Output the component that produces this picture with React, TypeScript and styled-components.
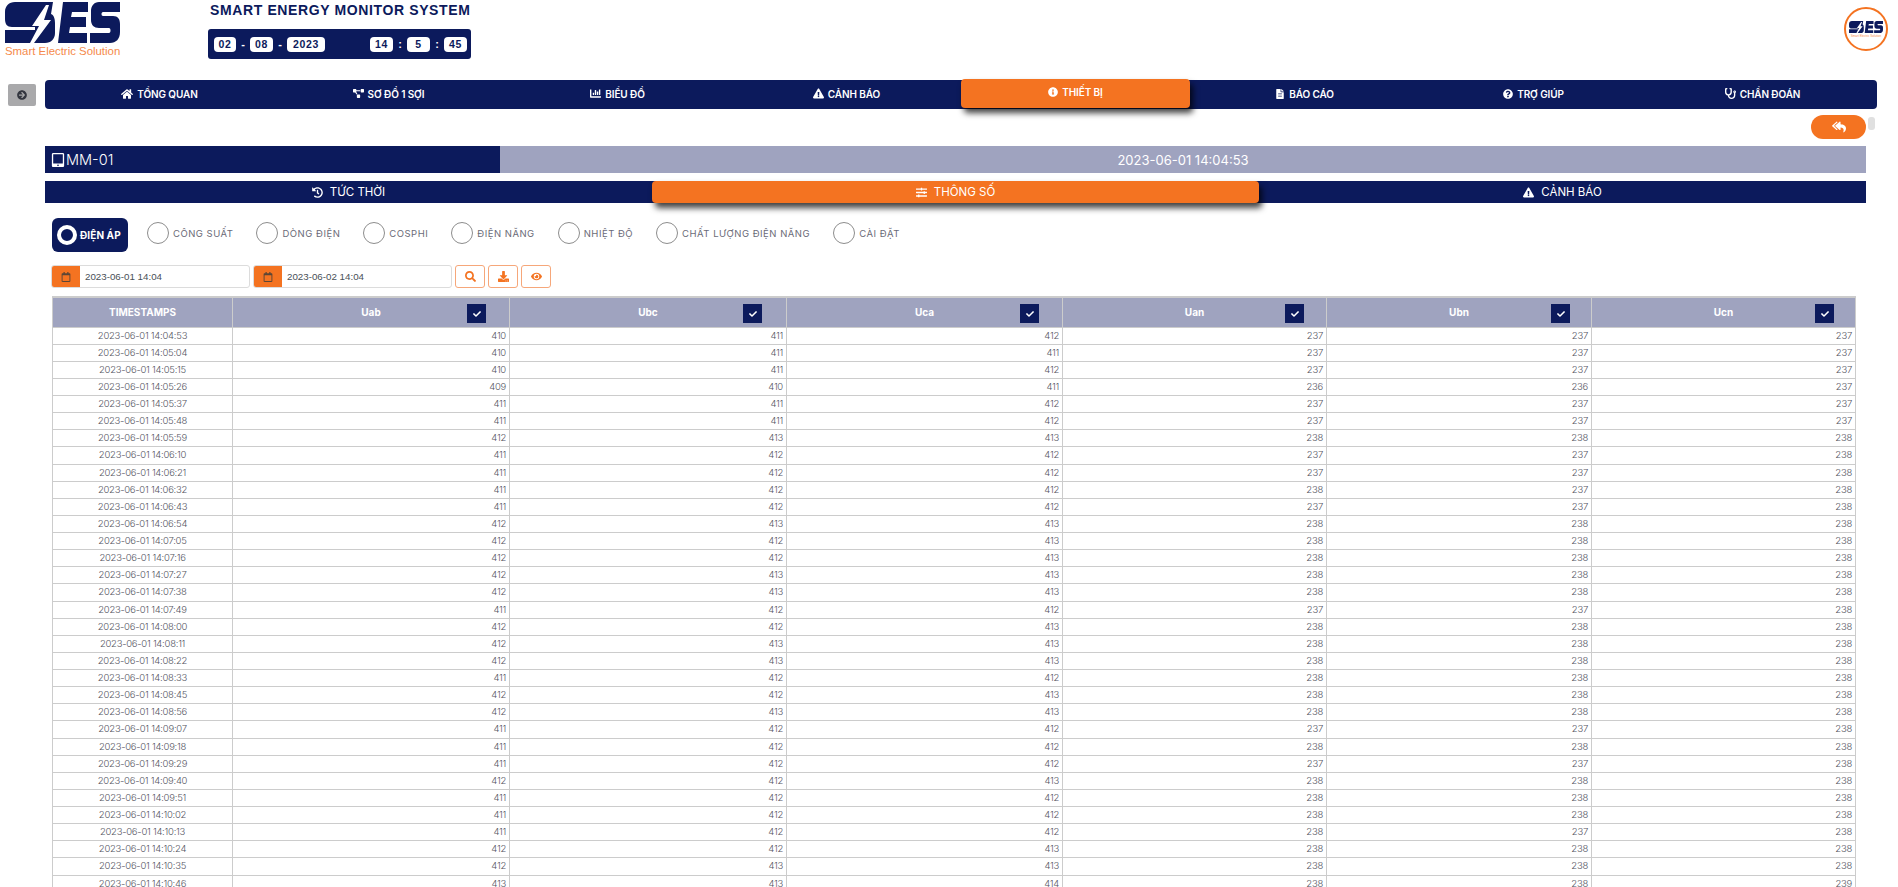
import React from 'react'
import styled, { createGlobalStyle } from 'styled-components'
import {
  FaArrowCircleRight,
  FaChartBar,
  FaCheck,
  FaDownload,
  FaExclamationTriangle,
  FaEye,
  FaFileAlt,
  FaHistory,
  FaHome,
  FaInfoCircle,
  FaProjectDiagram,
  FaQuestionCircle,
  FaRegCalendar,
  FaReplyAll,
  FaSearch,
  FaSlidersH,
  FaStethoscope,
  FaTabletAlt,
} from 'react-icons/fa'

const NAVY = '#0c1a5c'
const ORANGE = '#f47321'
const SLATE = '#9fa3bf'
const UI_FONT = `Inter, 'Noto Sans', sans-serif`

const GlobalStyle = createGlobalStyle`
  html, body {
    margin: 0;
    padding: 0;
    height: 100%;
    overflow: hidden;
    background: #fff;
    font-family: ${UI_FONT};
  }
  * { box-sizing: border-box; }
`

const Page = styled.div`
  width: 1898px;
  height: 887px;
  overflow: hidden;
  position: relative;
`

const Header = styled.header`
  display: flex;
  height: 80px;
`

const Brand = styled.div`
  width: 208px;
  padding: 2px 0 0 5px;
  display: flex;
  flex-direction: column;
`

const BrandName = styled.span`
  font-family: 'Liberation Sans', sans-serif;
  font-size: 11.4px;
  line-height: 13px;
  margin-top: 2px;
  color: #f58a4b;
  white-space: nowrap;
`

const TitleBlock = styled.div`
  display: flex;
  flex-direction: column;
  flex: 1;
`

const Title = styled.h1`
  margin: 0;
  height: 29px;
  padding: 1px 0 0 2px;
  font-family: 'Liberation Sans', sans-serif;
  font-weight: 700;
  font-size: 14px;
  line-height: 18px;
  letter-spacing: 0.62px;
  color: ${NAVY};
  white-space: nowrap;
`

const Clock = styled.div`
  width: 263px;
  height: 30px;
  background: ${NAVY};
  border-radius: 3px;
  display: flex;
  align-items: center;
  padding-left: 6px;
  font-family: 'Liberation Sans', sans-serif;
`

const ClockChip = styled.span<{ $w: number }>`
  width: ${(p) => p.$w}px;
  height: 15px;
  border-radius: 4px;
  background: #fff;
  color: ${NAVY};
  font-weight: 700;
  font-size: 10.5px;
  letter-spacing: 0.6px;
  display: flex;
  align-items: center;
  justify-content: center;
`

const ClockSep = styled.span`
  width: 14px;
  text-align: center;
  color: #fff;
  font-size: 11px;
  font-weight: 700;
`

const ClockGap = styled.span`
  width: 45px;
`

const Avatar = styled.div`
  width: 44px;
  height: 44px;
  margin: 7px 10px 0 0;
  border-radius: 50%;
  border: 2px solid ${ORANGE};
  background: #fff;
  display: flex;
  flex-direction: column;
  align-items: center;
  justify-content: center;
`

const NavRow = styled.div`
  display: flex;
  align-items: center;
  padding: 0 21px 0 8px;
`

const Toggle = styled.button`
  width: 28px;
  height: 22px;
  margin-right: 9px;
  padding: 0;
  border: none;
  border-radius: 2px;
  background: #a9a9ab;
  color: #33363f;
  display: flex;
  align-items: center;
  justify-content: center;
  font-size: 10px;
`

const Nav = styled.nav`
  flex: 1;
  height: 29px;
  background: ${NAVY};
  border-radius: 4px;
  display: grid;
  grid-template-columns: repeat(8, 1fr);
`

const NavItem = styled.div<{ $active?: boolean }>`
  display: flex;
  align-items: center;
  justify-content: center;
  gap: 4px;
  padding-bottom: 2px;
  color: #fff;
  font-weight: 600;
  font-size: 10px;
  letter-spacing: -0.1px;
  white-space: nowrap;
  ${(p) =>
    p.$active &&
    `
    background: ${ORANGE};
    border-radius: 4px;
    height: 29px;
    margin-top: -1px;
    box-shadow: 3px 5px 6px rgba(0, 0, 0, 0.75);
    position: relative;
    padding-bottom: 3px;
  `}
`

const Content = styled.main`
  padding: 0 32px 0 45px;
`

const BackRow = styled.div`
  display: flex;
  justify-content: flex-end;
  margin-top: 6px;
`

const BackButton = styled.button`
  width: 55px;
  height: 24px;
  border: none;
  border-radius: 12px;
  background: ${ORANGE};
  color: #fff;
  display: flex;
  align-items: center;
  justify-content: center;
  font-size: 14px;
  padding: 0;
`

const ScrollThumb = styled.div`
  position: absolute;
  left: 1868px;
  top: 117px;
  width: 7px;
  height: 13px;
  border-radius: 3px;
  background: #e0e0e0;
`

const DeviceBar = styled.div`
  display: flex;
  height: 27px;
  margin-top: 7px;
`

const DeviceName = styled.div`
  width: 455px;
  background: ${NAVY};
  color: #fff;
  display: flex;
  align-items: center;
  gap: 1px;
  padding-left: 6px;
  font-size: 14.5px;
  font-weight: 300;
`

const DeviceTime = styled.div`
  flex: 1;
  background: ${SLATE};
  color: #fff;
  display: flex;
  align-items: center;
  justify-content: center;
  font-size: 13px;
  font-weight: 400;
`

const Tabs = styled.div`
  display: grid;
  grid-template-columns: repeat(3, 1fr);
  height: 22px;
  margin-top: 8px;
  background: ${NAVY};
`

const Tab = styled.div<{ $active?: boolean }>`
  display: flex;
  align-items: center;
  justify-content: center;
  gap: 7px;
  color: #fff;
  font-size: 11.5px;
  font-weight: 400;
  ${(p) =>
    p.$active &&
    `
    background: ${ORANGE};
    border-radius: 4px;
    box-shadow: 3px 5px 6px rgba(0, 0, 0, 0.75);
    position: relative;
  `}
`

const Inner = styled.div`
  padding: 0 11px 0 7px;
`

const RadioRow = styled.div`
  display: flex;
  align-items: flex-start;
  height: 34px;
  margin-top: 15px;
`

const RadioItem = styled.div<{ $active?: boolean }>`
  display: flex;
  align-items: center;
  gap: 4px;
  margin: 4px 23px 0 0;
  font-size: 9.5px;
  font-weight: 400;
  letter-spacing: 0.5px;
  color: #6b6b78;
  white-space: nowrap;
  ${(p) =>
    p.$active &&
    `
    height: 34px;
    width: 76px;
    margin: 0 19px 0 0;
    padding-left: 5px;
    gap: 3px;
    border-radius: 6px;
    background: ${NAVY};
    color: #fff;
    font-weight: 700;
    font-size: 10px;
    letter-spacing: 0.1px;
  `}
`

const RadioDot = styled.span<{ $active?: boolean }>`
  width: ${(p) => (p.$active ? 20 : 22)}px;
  height: ${(p) => (p.$active ? 20 : 22)}px;
  border-radius: 50%;
  flex-shrink: 0;
  border: ${(p) => (p.$active ? '4px solid #fff' : '1px solid #8d8d8d')};
  background: ${(p) => (p.$active ? NAVY : '#fff')};
`

const FilterRow = styled.div`
  display: flex;
  align-items: center;
  height: 23px;
  margin-top: 13px;
  margin-left: -1px;
`

const DateField = styled.div`
  display: flex;
  width: 199px;
  height: 23px;
  margin-right: 3px;
  border: 1px solid #dcdcdc;
  border-radius: 3px;
  overflow: hidden;
  font-family: 'Liberation Sans', sans-serif;
  font-size: 9.75px;
  color: #495057;
`

const DateAddon = styled.span`
  width: 28px;
  background: ${ORANGE};
  color: #5b4636;
  display: flex;
  align-items: center;
  justify-content: center;
  font-size: 10px;
  flex-shrink: 0;
`

const DateValue = styled.span`
  display: flex;
  align-items: center;
  padding-left: 5px;
`

const IconButton = styled.button`
  width: 30px;
  height: 23px;
  margin-right: 3px;
  padding: 0;
  border: 1px solid #f6a77a;
  border-radius: 3px;
  background: #fff;
  color: ${ORANGE};
  display: flex;
  align-items: center;
  justify-content: center;
  font-size: 11px;
`

const Table = styled.table`
  width: 1803px;
  margin-top: 8px;
  table-layout: fixed;
  border-collapse: collapse;
`

const Col = styled.col<{ $w: number }>`
  width: ${(p) => p.$w}px;
`

const Th = styled.th`
  position: relative;
  height: 30px;
  padding: 0;
  background: ${SLATE};
  border: 1px solid #ccc;
  border-top-width: 2px;
  color: #fff;
  font-size: 10px;
  font-weight: 700;
  text-align: center;
`

const HeaderCheck = styled.span<{ $right: number }>`
  position: absolute;
  right: ${(p) => p.$right}px;
  top: 6px;
  width: 19px;
  height: 19px;
  background: ${NAVY};
  color: #fff;
  display: flex;
  align-items: center;
  justify-content: center;
  font-size: 8px;
`

const Td = styled.td<{ $time?: boolean }>`
  height: 17.13px;
  padding: 0 ${(p) => (p.$time ? 0 : 3)}px 0 0;
  border: 1px solid #ccc;
  font-size: 9.5px;
  font-weight: 300;
  line-height: 14px;
  letter-spacing: -0.25px;
  color: #55555f;
  text-align: ${(p) => (p.$time ? 'center' : 'right')};
`

// company logo, drawn
const LogoMark = ({ width }: { width: number }) => (
  <svg width={width} viewBox="0 0 115 41" fill={NAVY} style={{ display: 'block' }}>
    <path d="M10 0H48L46 12C49 13 50 17 50 21V31C50 37 46 41 40 41H0V28H30V25H7C2 25 0 22 0 17V10C0 4 4 0 10 0Z" />
    <path d="M41 3L27 24H34L25 41H29L46 18H39L44 3Z" fill="#fff" />
    <path d="M58 0H83V10H67L66 15H81V25H65L64 31H82V41H53Z" />
    <path d="M94 0H115V10H98C96 10 96 14 98 14H108C113 14 115 17 115 22V30C115 37 111 41 105 41H85V31H104C106 31 106 26 104 26H94C89 26 86 23 86 18V9C86 4 89 0 94 0Z" />
  </svg>
)

const AvatarName = styled.svg`
  display: block;
  margin-top: 1px;
`

const navItems = [
  { label: 'TỔNG QUAN', icon: <FaHome size={12} /> },
  { label: 'SƠ ĐỒ 1 SỢI', icon: <FaProjectDiagram size={11} /> },
  { label: 'BIỂU ĐỒ', icon: <FaChartBar size={11} /> },
  { label: 'CẢNH BÁO', icon: <FaExclamationTriangle size={11} /> },
  { label: 'THIẾT BỊ', icon: <FaInfoCircle size={10} />, active: true },
  { label: 'BÁO CÁO', icon: <FaFileAlt size={10} /> },
  { label: 'TRỢ GIÚP', icon: <FaQuestionCircle size={10} /> },
  { label: 'CHẨN ĐOÁN', icon: <FaStethoscope size={11} /> },
]

const radios = ['ĐIỆN ÁP', 'CÔNG SUẤT', 'DÒNG ĐIỆN', 'COSPHI', 'ĐIỆN NĂNG', 'NHIỆT ĐỘ', 'CHẤT LƯỢNG ĐIỆN NĂNG', 'CÀI ĐẶT']

const columns = [
  { name: 'TIMESTAMPS', width: 180, checkRight: 0 },
  { name: 'Uab', width: 277, checkRight: 23 },
  { name: 'Ubc', width: 277, checkRight: 24 },
  { name: 'Uca', width: 276, checkRight: 23 },
  { name: 'Uan', width: 264, checkRight: 22 },
  { name: 'Ubn', width: 265, checkRight: 21 },
  { name: 'Ucn', width: 264, checkRight: 21 },
]

const rows = [
  '14:04:53 410 411 412 237 237 237',
  '14:05:04 410 411 411 237 237 237',
  '14:05:15 410 411 412 237 237 237',
  '14:05:26 409 410 411 236 236 237',
  '14:05:37 411 411 412 237 237 237',
  '14:05:48 411 411 412 237 237 237',
  '14:05:59 412 413 413 238 238 238',
  '14:06:10 411 412 412 237 237 238',
  '14:06:21 411 412 412 237 237 238',
  '14:06:32 411 412 412 238 237 238',
  '14:06:43 411 412 412 237 237 238',
  '14:06:54 412 413 413 238 238 238',
  '14:07:05 412 412 413 238 238 238',
  '14:07:16 412 412 413 238 238 238',
  '14:07:27 412 413 413 238 238 238',
  '14:07:38 412 413 413 238 238 238',
  '14:07:49 411 412 412 237 237 238',
  '14:08:00 412 412 413 238 238 238',
  '14:08:11 412 413 413 238 238 238',
  '14:08:22 412 413 413 238 238 238',
  '14:08:33 411 412 412 238 238 238',
  '14:08:45 412 412 413 238 238 238',
  '14:08:56 412 413 413 238 238 238',
  '14:09:07 411 412 412 237 237 238',
  '14:09:18 411 412 412 238 238 238',
  '14:09:29 411 412 412 237 237 238',
  '14:09:40 412 412 413 238 238 238',
  '14:09:51 411 412 412 238 238 238',
  '14:10:02 411 412 412 238 238 238',
  '14:10:13 411 412 412 238 237 238',
  '14:10:24 412 412 413 238 238 238',
  '14:10:35 412 413 413 238 238 238',
  '14:10:46 413 413 414 238 238 239',
].map((r) => r.split(' '))

const App = () => {
  return (
    <Page>
      <GlobalStyle />
      <Header>
        <Brand>
          <LogoMark width={115} />
          <BrandName>Smart Electric Solution</BrandName>
        </Brand>
        <TitleBlock>
          <Title>SMART ENERGY MONITOR SYSTEM</Title>
          <Clock>
            <ClockChip $w={22}>02</ClockChip>
            <ClockSep>-</ClockSep>
            <ClockChip $w={23}>08</ClockChip>
            <ClockSep>-</ClockSep>
            <ClockChip $w={38}>2023</ClockChip>
            <ClockGap />
            <ClockChip $w={23}>14</ClockChip>
            <ClockSep>:</ClockSep>
            <ClockChip $w={23}>5</ClockChip>
            <ClockSep>:</ClockSep>
            <ClockChip $w={23}>45</ClockChip>
          </Clock>
        </TitleBlock>
        <Avatar>
          <LogoMark width={34} />
          <AvatarName width="34" height="3" viewBox="0 0 34 3">
            <text x="17" y="2.6" fontSize="3" textAnchor="middle" fill="#f58a4b" fontFamily="Liberation Sans">
              Smart Electric Solution
            </text>
          </AvatarName>
        </Avatar>
      </Header>

      <NavRow>
        <Toggle>
          <FaArrowCircleRight />
        </Toggle>
        <Nav>
          {navItems.map((item) => (
            <NavItem key={item.label} $active={item.active}>
              {item.icon}
              {item.label}
            </NavItem>
          ))}
        </Nav>
      </NavRow>

      <ScrollThumb />

      <Content>
        <BackRow>
          <BackButton>
            <FaReplyAll />
          </BackButton>
        </BackRow>
        <DeviceBar>
          <DeviceName>
            <FaTabletAlt size={14} />
            MM-01
          </DeviceName>
          <DeviceTime>2023-06-01 14:04:53</DeviceTime>
        </DeviceBar>
        <Tabs>
          <Tab>
            <FaHistory size={11} />
            TỨC THỜI
          </Tab>
          <Tab $active>
            <FaSlidersH size={11} />
            THÔNG SỐ
          </Tab>
          <Tab>
            <FaExclamationTriangle size={11} />
            CẢNH BÁO
          </Tab>
        </Tabs>

        <Inner>
          <RadioRow>
            {radios.map((label, i) => (
              <RadioItem key={label} $active={i === 0}>
                <RadioDot $active={i === 0} />
                {label}
              </RadioItem>
            ))}
          </RadioRow>

          <FilterRow>
            <DateField>
              <DateAddon>
                <FaRegCalendar />
              </DateAddon>
              <DateValue>2023-06-01 14:04</DateValue>
            </DateField>
            <DateField>
              <DateAddon>
                <FaRegCalendar />
              </DateAddon>
              <DateValue>2023-06-02 14:04</DateValue>
            </DateField>
            <IconButton>
              <FaSearch />
            </IconButton>
            <IconButton>
              <FaDownload />
            </IconButton>
            <IconButton>
              <FaEye />
            </IconButton>
          </FilterRow>

          <Table>
            <colgroup>
              {columns.map((c) => (
                <Col key={c.name} $w={c.width} />
              ))}
            </colgroup>
            <thead>
              <tr>
                {columns.map((c, i) => (
                  <Th key={c.name}>
                    {c.name}
                    {i > 0 && (
                      <HeaderCheck $right={c.checkRight}>
                        <FaCheck />
                      </HeaderCheck>
                    )}
                  </Th>
                ))}
              </tr>
            </thead>
            <tbody>
              {rows.map(([time, ...values]) => (
                <tr key={time}>
                  <Td $time>2023-06-01 {time}</Td>
                  {values.map((v, i) => (
                    <Td key={i}>{v}</Td>
                  ))}
                </tr>
              ))}
            </tbody>
          </Table>
        </Inner>
      </Content>
    </Page>
  )
}

export default App
